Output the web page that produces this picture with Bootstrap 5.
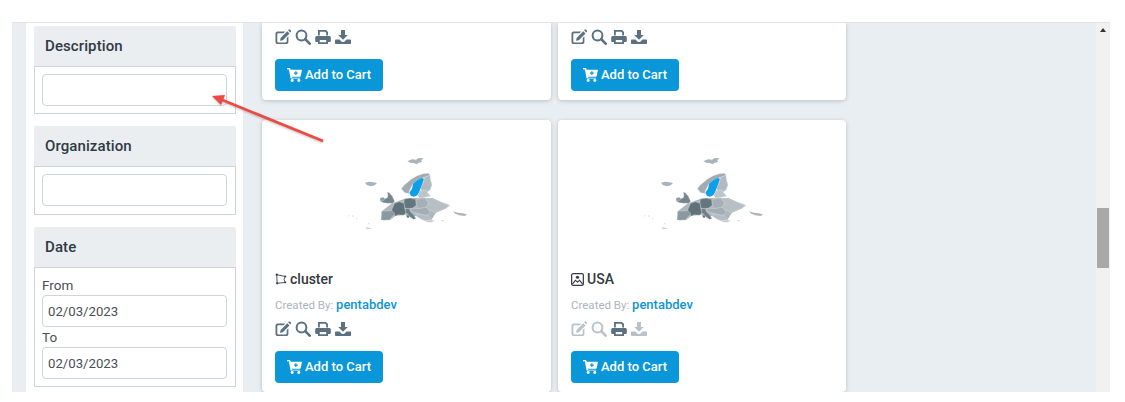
<!DOCTYPE html>
<html lang="en">
<head>
<meta charset="utf-8">
<title>Catalog</title>
<link href="https://cdn.jsdelivr.net/npm/bootstrap@5.3.0/dist/css/bootstrap.min.css" rel="stylesheet">
<style>
body{background:#fff;font-family:Roboto,"Liberation Sans",sans-serif;color:#343a40;overflow:hidden}
.stage{position:relative;margin:22px 15px 0 12px;height:370px;border-top:1px solid #e2e4e6;background:#e9eef2;overflow:hidden}
.filters{width:217px;margin-left:14px;background:#fff;padding:3px 7px 0 8px;flex:none}
.fpanel{margin-bottom:12px}
.fhead{height:40px;padding:0 11px;display:flex;align-items:center;background:#ebeef1;font-size:15px;font-weight:500;color:#2f3a42;border-radius:2px 2px 0 0;letter-spacing:.1px}
.fbody{border:1px solid #ccd3da;padding:7px 8px 7px 7px;background:#fff}
.fbody.roomy{padding-bottom:8px}
.fbody.dated{padding:8px 8px 7px 7px}
.fbody label{display:block;font-size:13.500px;line-height:18px;color:#495057;margin:0}
.finput{height:32px;border:1px solid #ced4da;border-radius:4px;padding:0 5px;font-size:13.200px;color:#495057;box-shadow:none}
.fbody label+.finput{margin-top:1px}
.finput+label{margin-top:1px}
.results{padding-left:19px;flex:1 1 auto}
.grid-cards{display:grid;grid-template-columns:289px 288px;column-gap:7px;row-gap:20px}
.tile{background:#fff;border-radius:4px;box-shadow:0 1px 4px rgba(60,70,80,.28);padding:0 13px 9px;border:0}
.tile.cut{border-radius:0 0 4px 4px;height:77px;padding-top:6px}
.tile.full{height:272px;padding-top:0;margin-bottom:-4px}
.maparea{height:151px;padding:20px 0 0 68px;margin:0 -13px}
.maparea svg{filter:blur(.5px);display:block}
.ttl{display:flex;align-items:center;gap:3px;font-size:14px;font-weight:500;color:#343a40;line-height:16px}
.byline{font-size:11.500px;color:#adb5bd;line-height:18px;margin-top:9px}
.byline b{font-size:13px;font-weight:500;color:#0f95d6}
.tools{display:flex;gap:4px;margin-top:7px;height:16px;align-items:center;color:#5b7080}
.tools svg{display:block}
.tools .off{opacity:.42}
.cartbtn{display:inline-flex;align-items:center;gap:3px;margin-top:14px;width:108px;height:32px;padding:0 0 0 12px;font-size:13px;font-weight:500;background:#0a97d9;border:0;border-radius:4px;color:#fff}
.cartbtn:hover{background:#0a97d9;color:#fff}
.track{position:absolute;top:0;bottom:0;right:0;width:14px;background:#f1f1f1}
.uparrow{position:absolute;top:5px;left:4px;width:0;height:0;border:3px solid transparent;border-bottom:4px solid #333;border-top:0}
.thumb{position:absolute;top:185px;left:1px;width:12px;height:60px;background:#a8a8a8}
.pointer{position:absolute;left:196px;top:66px;pointer-events:none;filter:drop-shadow(0 1px 1px rgba(90,60,60,.35))}
</style>
</head>
<body>
<svg width="0" height="0" class="position-absolute">
<defs>
<symbol id="i-edit" viewBox="0 0 16 16"><path fill="currentColor" d="M2.500 2.500h7.700L8.600 4.200H3.200c-.5 0-.9.4-.9.9v7.400c0 .5.4.9.9.9h7.600c.5 0 .9-.4.9-.9V9l1.700-1.700V13c0 1.200-1 2.100-2.100 2.100H2.600C1.400 15.100.5 14.200.5 13V4.600c0-1.100.9-2.100 2-2.100z"/><path fill="currentColor" d="M12.300 2.200l2.200 2.200-6.700 6.800-2.800.6.600-2.800zM13.100 1.300l.7-.7c.3-.3.8-.3 1.100 0l1 1c.3.3.3.8 0 1.100l-.7.8z"/></symbol>
<symbol id="i-search" viewBox="0 0 16 16"><circle cx="6.500" cy="6.500" r="4.900" fill="none" stroke="currentColor" stroke-width="2"/><path d="M10.200 10.200l4.500 4.500" stroke="currentColor" stroke-width="2.600" stroke-linecap="round"/></symbol>
<symbol id="i-print" viewBox="0 0 16 16"><path fill="currentColor" d="M3 1h8l2 2v3.500h-1.800V3.800L10.200 2.800H4.800v3.700H3zM1.800 7h12.400c.9 0 1.600.7 1.600 1.600V12c0 .5-.4.900-.9.900H13v2.100H3v-2.100H1.100c-.5 0-.9-.4-.9-.9V8.600C.2 7.700.9 7 1.800 7zM4.800 11v2.300h6.400V11z"/></symbol>
<symbol id="i-down" viewBox="0 0 16 16"><path fill="currentColor" d="M6 1h4v5h2.800L8 10.800 3.200 6H6zM.8 10.500h3.700L7 13h2l2.500-2.500h3.700c.5 0 .8.300.8.800v3c0 .5-.3.800-.8.800H.8c-.5 0-.8-.3-.8-.8v-3c0-.5.300-.8.800-.8z"/></symbol>
<symbol id="i-cart" viewBox="0 0 16 15"><path fill="currentColor" d="M.3 0h2.600c.3 0 .5.200.6.500L3.800 2H15.300c.4 0 .7.400.6.800l-1.300 6c-.1.300-.3.500-.6.500H5.300l.2 1.200h8.100c.4 0 .7.400.6.800H4.300c-.3 0-.5-.2-.6-.5L2 1.500H.3C.1 1.500 0 1.300 0 1.100V.4C0 .2.100 0 .3 0z"/><circle cx="5.500" cy="13.300" r="1.600" fill="currentColor"/><circle cx="12.600" cy="13.300" r="1.600" fill="currentColor"/><path d="M9.500 3.500v4M7.500 5.500h4" stroke="#0a97d9" stroke-width="1.300"/></symbol>
<symbol id="i-poly" viewBox="0 0 14 14"><path d="M2 2l10 2-1.500 3.500L12 11l-9.500 1z" fill="none" stroke="#343a40" stroke-width="1"/><g fill="#343a40"><circle cx="2" cy="2" r="1.300"/><circle cx="12" cy="4" r="1.100"/><circle cx="12" cy="11" r="1.100"/><circle cx="2.500" cy="12" r="1.300"/></g></symbol>
<symbol id="i-pic" viewBox="0 0 14 14"><rect x=".7" y=".7" width="12.600" height="12.600" rx="1.500" fill="none" stroke="#343a40" stroke-width="1.300"/><circle cx="7" cy="4.600" r="1.700" fill="#343a40"/><path d="M1.500 12l3.300-4.200 2.200 2 2.200-2 3.300 4.200" fill="none" stroke="#343a40" stroke-width="1.200"/></symbol>
<symbol id="i-map" viewBox="0 0 450 300">
<g fill="#aab4ba"><path d="M232 64L246 58 258 59 266 54 280 55 274 61 276 66 266 68 260 73 252 69 240 68z"/><path d="M105 128L117 125 131 127 141 129 134 136 123 139 110 135z"/><path d="M368 214L384 218 398 220 411 223 404 228 388 226 376 221z"/></g>
<path fill="#aeb7bd" d="M186 190L224 176 258 174 308 174 334 186 360 196 346 206 318 218 304 240 284 242 258 228 236 232 226 224 196 228 180 240 153 240 155 214z"/>
<g stroke="#dfe4e8" stroke-width="1" stroke-linejoin="round">
<path fill="#a1abb1" d="M214 146L222 136 234 126 246 116 262 107 280 101 296 100 300 106 284 112 262 120 250 130 240 148 236 160 224 158z"/>
<path fill="#b1bac0" d="M284 112L300 106 302 122 306 134 300 150 288 158 276 158 272 144 280 126z"/>
<path fill="#0d9fec" stroke="none" d="M250 130L262 120 274 114 282 116 278 128 272 144 268 156 262 166 252 170 243 168 238 158 246 146z"/>
<path fill="#bcc5ca" d="M270 152L288 150 294 160 302 168 286 172 268 176 264 166z"/>
<path fill="#76868e" d="M171 157L178 158 187 169 194 184 188 190 172 190 160 188 150 183 162 177 172 173 174 165z"/>
<path fill="#8a989f" d="M150 174L160 172 165 176 160 182 151 183z"/>
<path fill="#64767e" d="M223 177L240 174 257 178 259 196 248 204 238 206 224 204 222 190z"/>
<path fill="#5f7179" d="M194 190L208 185 222 190 224 204 228 218 220 226 204 224 196 228 188 222 184 212z"/>
<path fill="#8a99a0" d="M155 214L187 212 195 222 185 232 179 240 160 241 153 239 155 226z"/>
<path fill="#6f7f87" d="M226 206L238 206 242 216 252 226 258 236 250 238 241 232 232 222 226 216z"/>
<path fill="#a5afb5" d="M258 178L286 174 296 190 288 202 266 206 259 196z"/>
<path fill="#b6bfc4" d="M286 174L308 176 326 186 334 188 358 196 346 206 330 212 316 218 296 208 288 202 296 190z"/>
<path fill="#a3adb3" d="M240 206L266 206 288 202 296 208 300 220 290 226 276 224 262 220 250 216z"/>
<path fill="#b4bdc3" d="M256 220L276 224 294 226 302 240 286 242 274 238 262 230z"/>
<path fill="#c3cacf" d="M286 242L302 240 314 242 304 247 290 246z"/>
<path fill="#5f7179" stroke="none" d="M230 226L237 227 236 234 230 232z"/>
</g>
<path fill="#c9cfd3" d="M54 226L59 227 57 230zM66 226L72 228 69 231zM78 234L83 236 79 238zM114 248L119 249 116 252zM108 262L118 263 126 265 114 268 109 266zM334 240L343 241 337 244z"/>
</symbol>
</defs>
</svg>

<main class="stage d-flex">
  <aside class="filters">
    <section class="fpanel">
      <div class="fhead">Description</div>
      <div class="fbody"><input class="form-control finput" type="text" aria-label="Description"></div>
    </section>
    <section class="fpanel">
      <div class="fhead">Organization</div>
      <div class="fbody roomy"><input class="form-control finput" type="text" aria-label="Organization"></div>
    </section>
    <section class="fpanel">
      <div class="fhead">Date</div>
      <div class="fbody dated">
        <label for="dfrom">From</label>
        <input id="dfrom" class="form-control finput" type="text" value="02/03/2023">
        <label for="dto">To</label>
        <input id="dto" class="form-control finput" type="text" value="02/03/2023">
      </div>
    </section>
  </aside>

  <div class="results">
    <div class="grid-cards">
      <article class="tile cut">
        <div class="tools mt-0"><svg width="16" height="16"><use href="#i-edit"/></svg><svg width="16" height="16"><use href="#i-search"/></svg><svg width="16" height="16"><use href="#i-print"/></svg><svg width="16" height="16"><use href="#i-down"/></svg></div>
        <button class="btn cartbtn" type="button"><svg width="15" height="14"><use href="#i-cart"/></svg>Add to Cart</button>
      </article>
      <article class="tile cut">
        <div class="tools mt-0"><svg width="16" height="16"><use href="#i-edit"/></svg><svg width="16" height="16"><use href="#i-search"/></svg><svg width="16" height="16"><use href="#i-print"/></svg><svg width="16" height="16"><use href="#i-down"/></svg></div>
        <button class="btn cartbtn" type="button"><svg width="15" height="14"><use href="#i-cart"/></svg>Add to Cart</button>
      </article>
      <article class="tile full">
        <div class="maparea"><svg width="150" height="100"><use href="#i-map"/></svg></div>
        <div class="ttl"><svg width="12" height="12"><use href="#i-poly"/></svg>cluster</div>
        <div class="byline">Created By: <b>pentabdev</b></div>
        <div class="tools"><svg width="16" height="16"><use href="#i-edit"/></svg><svg width="16" height="16"><use href="#i-search"/></svg><svg width="16" height="16"><use href="#i-print"/></svg><svg width="16" height="16"><use href="#i-down"/></svg></div>
        <button class="btn cartbtn" type="button"><svg width="15" height="14"><use href="#i-cart"/></svg>Add to Cart</button>
      </article>
      <article class="tile full">
        <div class="maparea"><svg width="150" height="100"><use href="#i-map"/></svg></div>
        <div class="ttl"><svg width="13" height="13"><use href="#i-pic"/></svg>USA</div>
        <div class="byline">Created By: <b>pentabdev</b></div>
        <div class="tools"><svg class="off" width="16" height="16"><use href="#i-edit"/></svg><svg class="off" width="16" height="16"><use href="#i-search"/></svg><svg width="16" height="16"><use href="#i-print"/></svg><svg class="off" width="16" height="16"><use href="#i-down"/></svg></div>
        <button class="btn cartbtn" type="button"><svg width="15" height="14"><use href="#i-cart"/></svg>Add to Cart</button>
      </article>
    </div>
  </div>

  <div class="track" aria-hidden="true"><span class="uparrow"></span><span class="thumb"></span></div>

  <svg class="pointer" width="125" height="65" viewBox="0 0 125 65" aria-hidden="true">
    <path d="M115 52L12 10" stroke="#eb4a45" stroke-width="2.600" fill="none"/>
    <path d="M4 7l13-1-4 10z" fill="#eb4a45"/>
  </svg>
</main>
</body>
</html>
